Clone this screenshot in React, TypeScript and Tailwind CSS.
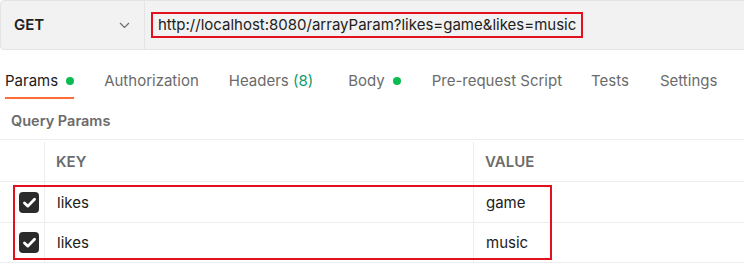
import React from "react";

const Check = () => (
  <div className="w-[20px] h-[21px] rounded-[4px] bg-[#2b2b2b] flex items-center justify-center">
    <svg width="15" height="15" viewBox="0 0 14 14">
      <path d="M2.3 7.4 L5.5 10.4 L11.7 3.9" fill="none" stroke="#ffffff" strokeWidth="2.6" strokeLinecap="round" strokeLinejoin="round" />
    </svg>
  </div>
);

const Dot = () => <span className="inline-block w-[8px] h-[8px] rounded-full bg-[#0cbb52] ml-[8px]" />;

export default function App() {
  const tabs: { label: React.ReactNode; active?: boolean; cls?: string }[] = [
    { label: <><span>Params</span><Dot /></>, active: true },
    { label: <span>Authorization</span>, cls: "-ml-[1px]" },
    { label: <span>Headers <span className="text-[#0f9b6e]">(8)</span></span>, cls: "-ml-[1px]" },
    { label: <><span>Body</span><Dot /></>, cls: "ml-[4px]" },
    { label: <span>Pre-request Script</span> },
    { label: <span>Tests</span>, cls: "-ml-[2px]" },
    { label: <span>Settings</span> },
  ];
  return (
    <div className="relative w-[744px] h-[266px] bg-white overflow-hidden text-[#212121]" style={{ fontFamily: "Inter, 'Noto Sans', sans-serif" }}>
      {/* request bar */}
      <div className="flex h-[50px] w-[760px] bg-[#f2f2f2] border border-[#e4e4e4] rounded-[4px]">
        <div className="w-[144px] flex items-center justify-between pl-[13px] pr-[14px] border-r border-[#e4e4e4]">
          <span className="text-[15px] font-semibold text-[#212121]">GET</span>
          <svg width="11" height="7" viewBox="0 0 11 7">
            <path d="M1 1 L5.5 5.5 L10 1" fill="none" stroke="#6b6b6b" strokeWidth="1.2" />
          </svg>
        </div>
        <div className="flex items-center pl-[6px]">
          <div className="h-[26px] w-[432px] border-2 border-[#e3101e] flex items-center pl-[5px] text-[15px] text-[#212121] whitespace-nowrap">
            http://localhost:8080/arrayParam?likes=game&amp;likes=music
          </div>
        </div>
      </div>

      {/* tabs */}
      <div className="flex pt-[21px] pl-[5px] gap-[31px] text-[15px] text-[#6b6b6b]">
        {tabs.map((t, i) => (
          <div
            key={i}
            className={
              "flex items-center h-[20px] box-content pb-[6px] border-b-2 whitespace-nowrap " +
              (t.cls ? t.cls + " " : "") +
              (t.active ? "border-[#ff6c37] text-[#212121]" : "border-transparent")
            }
          >
            {t.label}
          </div>
        ))}
      </div>

      {/* query params */}
      <div className="pl-[11px] pt-[12px] h-[40px] text-[14.5px] font-semibold text-[#6b6b6b] leading-[20px]">Query Params</div>

      {/* table */}
      <div className="border-t border-[#ededed] text-[15px]">
        <div className="flex h-[42px] border-b border-[#ededed]">
          <div className="w-[45px] border-r border-[#ededed] mt-[2px]" />
          <div className="w-[429px] border-r border-[#ededed] mt-[2px] flex items-center pl-[11px] pt-[1px] font-semibold text-[#6b6b6b]">KEY</div>
          <div className="flex-1 flex items-center pl-[11px] pt-[3px] font-semibold text-[#6b6b6b]">VALUE</div>
        </div>
        {["game", "music"].map((v, i) => (
          <div key={v} className={"flex border-b border-[#ededed] " + (i === 0 ? "h-[41px]" : "h-[40px]")}>
            <div className="w-[45px] border-r border-[#ededed] flex items-center pl-[19px]">
              <Check />
            </div>
            <div className="w-[429px] border-r border-[#ededed] flex items-center pl-[12px] pt-[2px]">likes</div>
            <div className="flex-1 flex items-center pl-[12px] pt-[2px]">{v}</div>
          </div>
        ))}
      </div>

      {/* annotation */}
      <div className="absolute left-[13px] top-[185px] w-[539px] h-[75px] border-2 border-[#e3101e] pointer-events-none" />
    </div>
  );
}
